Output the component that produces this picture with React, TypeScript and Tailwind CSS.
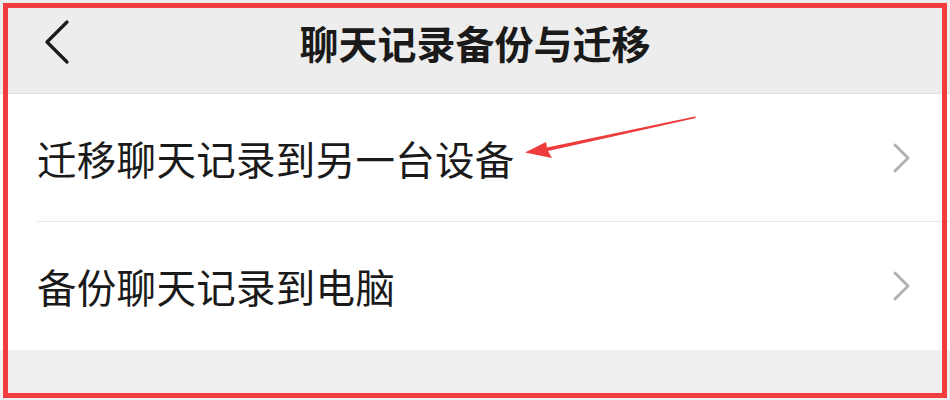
const cjk = { fontFamily: '"Noto Sans CJK SC", "Noto Sans", sans-serif' };

type RowProps = {
  label: string;
  divider?: boolean;
};

function Chevron() {
  return (
    <svg width="20" height="32" viewBox="0 0 20 32" fill="none" className="shrink-0">
      <path d="M3 3 L16 16 L3 29" stroke="#b3b3b3" strokeWidth="3" strokeLinecap="round" strokeLinejoin="round" />
    </svg>
  );
}

function BackIcon() {
  return (
    <svg width="26" height="46" viewBox="0 0 26 46" fill="none">
      <path d="M23 3 L3 23 L23 43" stroke="#1a1a1a" strokeWidth="3.2" strokeLinecap="round" strokeLinejoin="round" />
    </svg>
  );
}

function SettingRow({ label, divider }: RowProps) {
  return (
    <div className="bg-white pl-[37px]">
      <div className={`flex items-center justify-between h-[128px] pr-[38px] ${divider ? 'border-b border-[#e8e8e8]' : ''}`}>
        <span className="text-[39.5px] leading-none text-[#1a1a1a] tracking-[0.3px]" style={cjk}>
          {label}
        </span>
        <Chevron />
      </div>
    </div>
  );
}

export default function App() {
  return (
    <div className="relative w-[950px] h-[400px] overflow-hidden bg-[#efefef]">
      {/* nav bar */}
      <div className="relative flex items-center justify-center h-[94px] bg-[#ededed] border-b border-[#e2e2e2]">
        <button className="absolute left-[44px] top-[19px]" aria-label="back">
          <BackIcon />
        </button>
        <h1 className="text-[39px] font-bold leading-none text-[#1a1a1a] pb-[8px]" style={cjk}>
          聊天记录备份与迁移
        </h1>
      </div>

      <SettingRow label="迁移聊天记录到另一台设备" divider />
      <SettingRow label="备份聊天记录到电脑" />

      {/* annotation arrow */}
      <svg className="absolute left-0 top-0 pointer-events-none" width="950" height="400">
        <polygon
          points="695,116.5 696,118 548,151 552,158 525,152.5 546,142 547,147.5"
          fill="#ee3b3b"
        />
      </svg>

      {/* highlight frame */}
      <div className="absolute left-[3px] top-[3px] right-[3px] bottom-[2px] border-[5px] border-[#f03e3e] pointer-events-none" />
    </div>
  );
}
